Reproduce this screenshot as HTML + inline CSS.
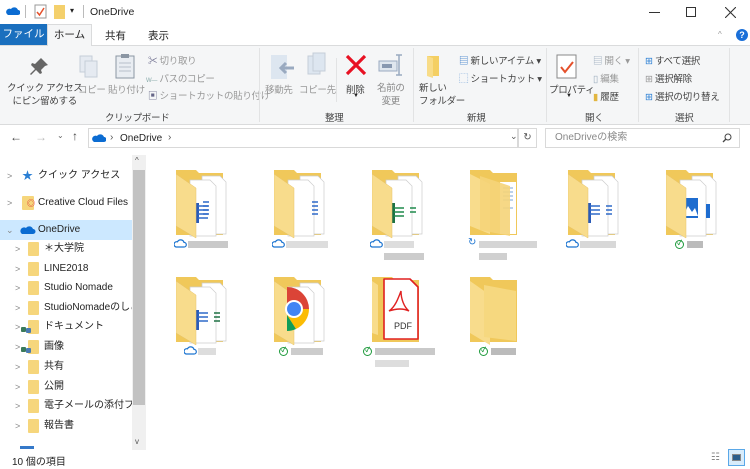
<!DOCTYPE html>
<html><head><meta charset="utf-8"><style>
*{margin:0;padding:0;box-sizing:border-box}
body{width:750px;height:469px;overflow:hidden;background:#fff;font-family:"Liberation Sans","Noto Sans CJK JP",sans-serif;font-size:10px;color:#222;position:relative}
.a{position:absolute;white-space:nowrap}
.lbl{font-size:9.5px;color:#444;letter-spacing:-0.3px}
.nav{position:absolute;left:0;width:132px;height:20px;font-size:10px;line-height:20px;overflow:hidden}
.chev{position:absolute;font-size:9px;color:#888}
.fd{position:absolute;width:18px;height:14px;background:#f6d67c;border-radius:1px}
.bl{position:absolute;background:#c9c9c9;height:7px}
.ok{position:absolute;width:9px;height:9px;border:1.3px solid #1e9a3c;border-radius:50%;font-size:7px;line-height:6px;text-align:center;color:#1e9a3c;font-weight:bold}
.pp{position:absolute;width:5px;height:5px;background:#3a7a5a;border-radius:1px}
</style></head><body>
<!-- title bar -->
<svg class="a" style="left:6px;top:7px" width="14" height="9"><path d="M2 8h10a2.5 2.5 0 0 0 0-5 4 4 0 0 0-7-1A3 3 0 0 0 2 8z" fill="#0b6cd2"/></svg>
<div class="a" style="left:25px;top:5px;width:1px;height:13px;background:#bbb"></div>
<svg class="a" style="left:34px;top:4px" width="13" height="15"><rect x="1" y="1" width="11" height="13" fill="#fff" stroke="#999"/><path d="M3 8l2.5 3L10 4" stroke="#e5502b" stroke-width="1.5" fill="none"/></svg>
<div class="a" style="left:54px;top:5px;width:11px;height:14px;background:#f4d06c"></div>
<div class="a" style="left:70px;top:6px;font-size:8px">▾</div>
<div class="a" style="left:83px;top:5px;width:1px;height:13px;background:#bbb"></div>
<div class="a" style="left:90px;top:6px;font-size:10.5px">OneDrive</div>
<div class="a" style="left:649px;top:12px;width:11px;height:1px;background:#333"></div>
<div class="a" style="left:686px;top:7px;width:10px;height:10px;border:1px solid #333"></div>
<svg class="a" style="left:725px;top:7px" width="11" height="11"><path d="M0 0l11 11M11 0L0 11" stroke="#333" stroke-width="1.1"/></svg>
<!-- tabs -->
<div class="a" style="left:0;top:24px;width:47px;height:21px;background:#1a6fbe;color:#fff;font-size:10.5px;line-height:21px;text-align:center">ファイル</div>
<div class="a" style="left:47px;top:24px;width:45px;height:22px;background:#f5f6f7;border:1px solid #dadbdc;border-bottom:none;font-size:10.5px;line-height:20px;text-align:center;z-index:2">ホーム</div>
<div class="a" style="left:105px;top:28px;font-size:10.5px">共有</div>
<div class="a" style="left:148px;top:28px;font-size:10.5px">表示</div>
<div class="a" style="left:718px;top:30px;font-size:8px;color:#999">^</div>
<div class="a" style="left:736px;top:29px;width:12px;height:12px;border-radius:50%;background:#1a6fd8;color:#fff;font-size:9px;font-weight:bold;text-align:center;line-height:12px">?</div>
<!-- ribbon -->
<div class="a" style="left:0;top:45px;width:750px;height:80px;background:#f5f6f7;border-top:1px solid #dadbdc;border-bottom:1px solid #dadbdc"></div>
<svg class="a" style="left:28px;top:56px" width="22" height="22"><path d="M13 2l7 7-3 1-4 4 1 3-2 1-4-4-5 5-1-1 5-5-4-4 1-2 3 1 4-4z" fill="#666"/></svg>
<div class="a lbl" style="left:7px;top:82px;line-height:13px;text-align:center">クイック アクセス<br>にピン留めする</div>
<svg class="a" style="left:78px;top:54px" width="22" height="26"><rect x="2" y="2" width="12" height="16" fill="#e5eaf1" stroke="#c5cdd8"/><rect x="7" y="7" width="12" height="16" fill="#e5eaf1" stroke="#c5cdd8"/></svg>
<div class="a lbl" style="left:78px;top:82px;color:#999">コピー</div>
<svg class="a" style="left:114px;top:52px" width="22" height="28"><rect x="2" y="4" width="18" height="22" fill="#e9edf2" stroke="#8b96a3"/><rect x="7" y="2" width="8" height="4" fill="#8b96a3"/><path d="M5 11h12M5 15h12M5 19h12" stroke="#b8c0cb"/></svg>
<div class="a lbl" style="left:108px;top:82px;color:#999">貼り付け</div>
<div class="a lbl" style="left:148px;top:53px;color:#999"><span style="color:#668">✂</span> 切り取り</div>
<div class="a lbl" style="left:146px;top:71px;color:#999"><span style="font-size:6px;color:#8aa">W—</span> パスのコピー</div>
<div class="a lbl" style="left:148px;top:88px;color:#999"><span style="color:#668">▣</span> ショートカットの貼り付け</div>
<div class="a lbl" style="left:105px;top:110px">クリップボード</div>
<div class="a" style="left:259px;top:48px;width:1px;height:74px;background:#e2e3e4"></div>
<svg class="a" style="left:270px;top:54px" width="26" height="26"><rect x="1" y="1" width="16" height="24" fill="#dde6f0"/><path d="M24 14H12M16 9l-5 5 5 5" stroke="#9aaac0" stroke-width="3" fill="none"/></svg>
<div class="a lbl" style="left:265px;top:82px;color:#999">移動先</div>
<svg class="a" style="left:306px;top:52px" width="22" height="26"><rect x="2" y="4" width="12" height="18" fill="#dde6f0" stroke="#c5cdd8"/><rect x="7" y="1" width="12" height="18" fill="#dde6f0" stroke="#c5cdd8"/></svg>
<div class="a lbl" style="left:299px;top:82px;color:#999">コピー先</div>
<div class="a" style="left:336px;top:58px;width:1px;height:44px;background:#e2e3e4"></div>
<svg class="a" style="left:345px;top:54px" width="22" height="22"><path d="M2 2l18 18M20 2L2 20" stroke="#e81123" stroke-width="3.2"/></svg>
<div class="a lbl" style="left:346px;top:82px">削除</div>
<div class="a" style="left:353px;top:93px;font-size:6px">▼</div>
<svg class="a" style="left:378px;top:53px" width="26" height="24"><rect x="1" y="8" width="18" height="10" fill="#dfe6ee" stroke="#9aaac0"/><rect x="4" y="11" width="10" height="4" fill="#8898b0"/><path d="M21 2v20M18 2h6M18 22h6" stroke="#9aaac0" stroke-width="1.5"/></svg>
<div class="a lbl" style="left:377px;top:82px;line-height:13px;text-align:center;color:#888">名前の<br>変更</div>
<div class="a lbl" style="left:325px;top:110px">整理</div>
<div class="a" style="left:413px;top:48px;width:1px;height:74px;background:#e2e3e4"></div>
<svg class="a" style="left:425px;top:54px" width="18" height="24"><path d="M2 2h12v20H2z" fill="#f4cf63"/><path d="M2 2l6 2v20l-6-2z" fill="#f8dc88"/></svg>
<div class="a lbl" style="left:419px;top:82px;line-height:13px">新しい<br>フォルダー</div>
<div class="a lbl" style="left:459px;top:53px"><span style="color:#3579c9">▤</span> 新しいアイテム ▾</div>
<div class="a lbl" style="left:459px;top:71px"><span style="color:#3579c9">⬚</span> ショートカット ▾</div>
<div class="a lbl" style="left:467px;top:110px">新規</div>
<div class="a" style="left:546px;top:48px;width:1px;height:74px;background:#e2e3e4"></div>
<svg class="a" style="left:556px;top:54px" width="24" height="26"><rect x="1" y="1" width="19" height="23" fill="#fff" stroke="#888"/><path d="M5 13l4 5 8-10" stroke="#e5502b" stroke-width="2" fill="none"/></svg>
<div class="a lbl" style="left:549px;top:82px">プロパティ</div>
<div class="a" style="left:566px;top:93px;font-size:6px">▼</div>
<div class="a lbl" style="left:593px;top:53px;color:#999"><span style="color:#9ab">▤</span> 開く ▾</div>
<div class="a lbl" style="left:593px;top:71px;color:#999"><span style="color:#9ab">▯</span> 編集</div>
<div class="a lbl" style="left:593px;top:89px"><span style="color:#e2b640">▮</span> 履歴</div>
<div class="a lbl" style="left:585px;top:110px">開く</div>
<div class="a" style="left:638px;top:48px;width:1px;height:74px;background:#e2e3e4"></div>
<div class="a lbl" style="left:645px;top:53px"><span style="color:#2a7fd4">⊞</span> すべて選択</div>
<div class="a lbl" style="left:645px;top:71px"><span style="color:#999">⊞</span> 選択解除</div>
<div class="a lbl" style="left:645px;top:89px"><span style="color:#2a7fd4">⊞</span> 選択の切り替え</div>
<div class="a lbl" style="left:675px;top:110px">選択</div>
<div class="a" style="left:729px;top:48px;width:1px;height:74px;background:#e2e3e4"></div>
<!-- address bar -->
<div class="a" style="left:10px;top:130px;font-size:12px;color:#444">←</div>
<div class="a" style="left:35px;top:130px;font-size:12px;color:#bbb">→</div>
<div class="a" style="left:57px;top:131px;font-size:8px;color:#666">⌄</div>
<div class="a" style="left:72px;top:129px;font-size:12px;color:#444">↑</div>
<div class="a" style="left:88px;top:128px;width:430px;height:20px;border:1px solid #d9d9d9"></div>
<svg class="a" style="left:92px;top:134px" width="14" height="9"><path d="M2 8h10a2.5 2.5 0 0 0 0-5 4 4 0 0 0-7-1A3 3 0 0 0 2 8z" fill="#0b6cd2"/></svg>
<div class="a" style="left:110px;top:132px;font-size:10px;color:#555">›</div>
<div class="a" style="left:120px;top:133px;font-size:10px">OneDrive</div>
<div class="a" style="left:168px;top:132px;font-size:10px;color:#555">›</div>
<div class="a" style="left:510px;top:131px;font-size:9px;color:#555">⌄</div>
<div class="a" style="left:518px;top:128px;width:19px;height:20px;border:1px solid #d9d9d9;font-size:10px;text-align:center;line-height:18px;color:#555">↻</div>
<div class="a" style="left:545px;top:128px;width:195px;height:20px;border:1px solid #d9d9d9;color:#888;padding-left:9px;line-height:18px;font-size:10px">OneDriveの検索</div>
<svg class="a" style="left:722px;top:133px" width="10" height="10"><circle cx="6" cy="4" r="3" fill="none" stroke="#444"/><path d="M4 6L1 9" stroke="#444" stroke-width="1.3"/></svg>
<!-- nav pane -->
<div class="a" style="left:0;top:220px;width:132px;height:20px;background:#cce8ff"></div>
<div class="a" style="left:132px;top:155px;width:14px;height:295px;background:#f0f0f0"></div>
<div class="a" style="left:133px;top:170px;width:12px;height:235px;background:#c2c2c2"></div>
<div class="a" style="left:135px;top:156px;font-size:8px;color:#555">^</div>
<div class="a" style="left:135px;top:437px;font-size:8px;color:#555">v</div>
<div class="nav" style="top:166px"><span class="chev" style="left:7px">&gt;</span><span class="a" style="left:22px;color:#2a7fd4;font-size:11px">★</span><span class="a" style="left:38px">クイック アクセス</span></div>
<div class="nav" style="top:193px"><span class="chev" style="left:7px">&gt;</span><span class="fd" style="left:22px;top:3px;width:12px"></span><span class="a" style="left:27px;top:1px;color:#da1f26;font-size:8px">◎</span><span class="a" style="left:38px">Creative Cloud Files</span></div>
<div class="nav" style="top:220px"><span class="chev" style="left:6px">⌄</span><svg class="a" style="left:20px;top:6px" width="16" height="9"><path d="M2 8h11a2.5 2.5 0 0 0 0-5 4 4 0 0 0-7-1A3 3 0 0 0 2 8z" fill="#0b6cd2"/></svg><span class="a" style="left:38px">OneDrive</span></div>
<div class="nav" style="top:239px"><span class="chev" style="left:15px">&gt;</span><span class="fd" style="left:28px;top:3px;width:11px"></span><span class="a" style="left:44px">＊大学院</span></div>
<div class="nav" style="top:259px"><span class="chev" style="left:15px">&gt;</span><span class="fd" style="left:28px;top:3px;width:11px"></span><span class="a" style="left:44px">LINE2018</span></div>
<div class="nav" style="top:278px"><span class="chev" style="left:15px">&gt;</span><span class="fd" style="left:28px;top:3px;width:11px"></span><span class="a" style="left:44px">Studio Nomade</span></div>
<div class="nav" style="top:298px"><span class="chev" style="left:15px">&gt;</span><span class="fd" style="left:28px;top:3px;width:11px"></span><span class="a" style="left:44px">StudioNomadeのしご</span></div>
<div class="nav" style="top:317px"><span class="chev" style="left:15px">&gt;</span><span class="fd" style="left:28px;top:3px;width:11px"></span><span class="pp" style="left:21px;top:10px"></span><span class="pp" style="left:26px;top:11px;background:#4a7ab0"></span><span class="a" style="left:44px">ドキュメント</span></div>
<div class="nav" style="top:337px"><span class="chev" style="left:15px">&gt;</span><span class="fd" style="left:28px;top:3px;width:11px"></span><span class="pp" style="left:21px;top:10px"></span><span class="pp" style="left:26px;top:11px;background:#4a7ab0"></span><span class="a" style="left:44px">画像</span></div>
<div class="nav" style="top:357px"><span class="chev" style="left:15px">&gt;</span><span class="fd" style="left:28px;top:3px;width:11px"></span><span class="a" style="left:44px">共有</span></div>
<div class="nav" style="top:377px"><span class="chev" style="left:15px">&gt;</span><span class="fd" style="left:28px;top:3px;width:11px"></span><span class="a" style="left:44px">公開</span></div>
<div class="nav" style="top:396px"><span class="chev" style="left:15px">&gt;</span><span class="fd" style="left:28px;top:3px;width:11px"></span><span class="a" style="left:44px">電子メールの添付ファイ</span></div>
<div class="nav" style="top:416px"><span class="chev" style="left:15px">&gt;</span><span class="fd" style="left:28px;top:3px;width:11px"></span><span class="a" style="left:44px">報告書</span></div>
<div class="a" style="left:20px;top:446px;width:14px;height:3px;background:#3579c9"></div>
<!-- status -->
<div class="a" style="left:12px;top:453px;font-size:10px">10 個の項目</div>
<div class="a" style="left:711px;top:452px;font-size:10px;color:#888">☷</div>
<div class="a" style="left:728px;top:449px;width:17px;height:17px;border:1px solid #5aa8e8;background:#d8ecfb"></div>
<div class="a" style="left:732px;top:454px;width:9px;height:7px;background:#2a5c8a;border:1px solid #888"></div>

<svg width="0" height="0" style="position:absolute"><defs>
<g id="fb"><path d="M0 2h20l3 3h24v62H0z" fill="#f0c85a"/></g>
<g id="ff"><path d="M0 6l20 14v50L0 58z" fill="#f8dc8c"/><path d="M0 6l20 14v50L0 58z" fill="none" stroke="#e7c36a" stroke-width=".5"/></g>
<g id="pp"><path d="M26 8h18l6 6v52H26z" fill="#fff" stroke="#ccc" stroke-width=".7"/><path d="M14 12h20l6 6v50H14z" fill="#fff" stroke="#ccc" stroke-width=".7"/></g>
<g id="cl"><path d="M2 8h8a2.3 2.3 0 0 0 0-4.6 3.5 3.5 0 0 0-6.5-.6A2.7 2.7 0 0 0 2 8z" fill="none" stroke="#1a73d0" stroke-width="1.2"/></g>
</defs></svg>

<!-- row1 -->
<svg class="a" style="left:176px;top:168px" width="56" height="72"><use href="#fb"/><use href="#pp"/><path d="M27 34h6M27 38h6M27 42h6M27 46h6" stroke="#2e6ac9" stroke-width="1.5"/><rect x="16" y="35" width="7" height="20" fill="#2a5bb8"/><path d="M22 38h10M22 42h10M22 46h10M22 50h10" stroke="#2e6ac9" stroke-width="1.5"/><use href="#ff"/></svg>
<svg class="a" style="left:274px;top:168px" width="56" height="72"><use href="#fb"/><use href="#pp"/><path d="M38 34h6M38 38h6M38 42h6M38 46h6" stroke="#2e6ac9" stroke-width="1.5"/><use href="#ff"/></svg>
<svg class="a" style="left:372px;top:168px" width="56" height="72"><use href="#fb"/><use href="#pp"/><rect x="16" y="35" width="7" height="20" fill="#1e7144"/><path d="M22 40h10M22 44h10M22 48h10M38 40h6M38 44h6" stroke="#1e8a4c" stroke-width="1.5"/><use href="#ff"/></svg>
<svg class="a" style="left:470px;top:168px" width="56" height="72"><use href="#fb"/><path d="M30 14h16v52H30z" fill="#fff"/><path d="M33 20h10M33 24h10M33 28h10M33 32h10M33 40h10" stroke="#7aa6d8"/><path d="M0 6l20 10v50L0 58z" fill="#f8dc8c"/><path d="M10 8l30 10v50L10 62z" fill="#f5d479" opacity=".9"/></svg>
<svg class="a" style="left:568px;top:168px" width="56" height="72"><use href="#fb"/><use href="#pp"/><rect x="16" y="35" width="7" height="20" fill="#2a5bb8"/><path d="M22 38h10M22 42h10M22 46h10M38 38h6M38 42h6M38 46h6" stroke="#2e6ac9" stroke-width="1.5"/><use href="#ff"/></svg>
<svg class="a" style="left:666px;top:168px" width="56" height="72"><use href="#fb"/><use href="#pp"/><rect x="16" y="30" width="16" height="20" fill="#1e6ccf"/><path d="M17 48l5-10 4 6 3-4 3 8z" fill="#fff"/><rect x="40" y="36" width="4" height="14" fill="#1e6ccf"/><use href="#ff"/></svg>
<!-- row1 labels -->
<svg class="a" style="left:174px;top:239px" width="13" height="10"><use href="#cl"/></svg><div class="bl" style="left:188px;top:241px;width:40px"></div>
<svg class="a" style="left:272px;top:239px" width="13" height="10"><use href="#cl"/></svg><div class="bl" style="left:286px;top:241px;width:42px;background:#ddd"></div>
<svg class="a" style="left:370px;top:239px" width="13" height="10"><use href="#cl"/></svg><div class="bl" style="left:384px;top:241px;width:30px;background:#ddd"></div><div class="bl" style="left:384px;top:253px;width:40px;background:#ccc"></div>
<div class="a" style="left:468px;top:237px;color:#1a73d0;font-size:10px">↻</div><div class="bl" style="left:479px;top:241px;width:58px;background:#d5d5d5"></div><div class="bl" style="left:479px;top:253px;width:28px;background:#d0d0d0"></div>
<svg class="a" style="left:566px;top:239px" width="13" height="10"><use href="#cl"/></svg><div class="bl" style="left:580px;top:241px;width:36px;background:#d8d8d8"></div>
<div class="ok" style="left:675px;top:240px">✓</div><div class="bl" style="left:687px;top:241px;width:16px;background:#bbb"></div>
<!-- row2 -->
<svg class="a" style="left:176px;top:275px" width="56" height="72"><use href="#fb"/><use href="#pp"/><rect x="16" y="35" width="7" height="20" fill="#2a5bb8"/><path d="M22 38h10M22 42h10M22 46h10" stroke="#2e6ac9" stroke-width="1.5"/><path d="M38 38h6M38 42h6M38 46h6" stroke="#1e7144" stroke-width="1.5"/><use href="#ff"/></svg>
<svg class="a" style="left:274px;top:275px" width="56" height="72"><use href="#fb"/><use href="#pp"/><use href="#ff"/><path d="M13 12A22 22 0 0 1 35 34H13z" fill="#db4437"/><path d="M35 34A22 22 0 0 1 22 54L13 40v-6z" fill="#fbbc05"/><path d="M13 40l9 14a22 22 0 0 1-9 2z" fill="#0f9d58"/><circle cx="20" cy="34" r="9" fill="#fff"/><circle cx="20" cy="34" r="7" fill="#4285f4"/></svg>
<svg class="a" style="left:372px;top:275px" width="56" height="72"><use href="#fb"/><path d="M12 4h26l8 8v52H12z" fill="#fff" stroke="#e02020" stroke-width="1.6" stroke-linejoin="round"/><path d="M29 16c-3 8-6 16-12 20 6-2 14-3 20 0-5-4-8-12-8-20z" fill="none" stroke="#e02020" stroke-width="1.4"/><text x="22" y="54" font-size="9" font-family="Liberation Sans" fill="#333">PDF</text><path d="M0 6l6 4v50L0 58z" fill="#f8dc8c"/></svg>
<svg class="a" style="left:470px;top:275px" width="56" height="72"><use href="#fb"/><path d="M0 6l20 14v50L0 58z" fill="#f8dc8c"/><path d="M14 10l32 6v50L14 62z" fill="#f6d87f"/></svg>
<!-- row2 labels -->
<svg class="a" style="left:184px;top:346px" width="13" height="10"><use href="#cl"/></svg><div class="bl" style="left:198px;top:348px;width:18px;background:#ddd"></div>
<div class="ok" style="left:279px;top:347px">✓</div><div class="bl" style="left:291px;top:348px;width:32px;background:#ccc"></div>
<div class="ok" style="left:363px;top:347px">✓</div><div class="bl" style="left:375px;top:348px;width:60px"></div><div class="bl" style="left:375px;top:360px;width:34px;background:#ddd"></div>
<div class="ok" style="left:479px;top:347px">✓</div><div class="bl" style="left:491px;top:348px;width:25px;background:#bbb"></div>
</body></html>
